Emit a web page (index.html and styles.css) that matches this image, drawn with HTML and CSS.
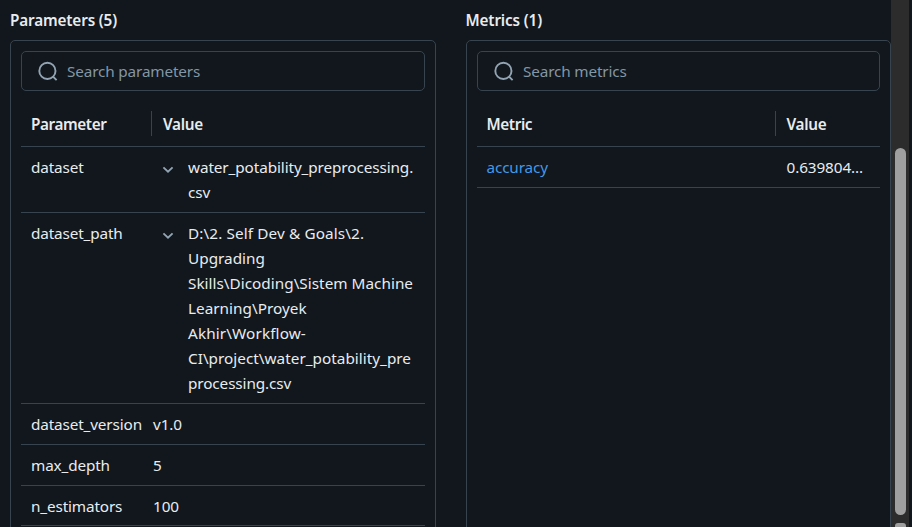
FILE: index.html
```html
<!DOCTYPE html>
<html lang="en">
<head>
<meta charset="utf-8">
<title>Run overview</title>
<link rel="stylesheet" href="styles.css">
</head>
<body>
<div class="app">
  <main class="content">
    <section class="column">
      <h2 class="title">Parameters (5)</h2>
      <div class="panel">
        <div class="search">
          <svg class="search-icon" viewBox="0 0 20 20"><circle cx="9.4" cy="9.9" r="8.1"/><path d="M14.8 15.3 18.6 19.1"/></svg>
          <span>Search parameters</span>
        </div>
        <div class="row head params"><div class="name">Parameter</div><div class="value divided">Value</div></div>
        <div class="row params"><div class="name">dataset</div><div class="value expandable">
          <svg class="chevron" viewBox="0 0 12 8"><path d="M1.4 1.4 6 5.6l4.6-4.2"/></svg>
          <div>water_potability_preprocessing.<br>csv</div></div></div>
        <div class="row params"><div class="name">dataset_path</div><div class="value expandable">
          <svg class="chevron" viewBox="0 0 12 8"><path d="M1.4 1.4 6 5.6l4.6-4.2"/></svg>
          <div><span class="wider">D:\2. Self Dev &amp; Goals\2.</span><br><span class="wide">Upgrading</span><br><span class="wide">Skills\Dicoding\Sistem Machine</span><br><span class="wide">Learning\Proyek</span><br><span class="wider">Akhir\Workflow-</span><br><span class="wide">CI\project\water_potability_pre</span><br>processing.csv</div></div></div>
        <div class="row params"><div class="name">dataset_version</div><div class="value">v1.0</div></div>
        <div class="row params"><div class="name">max_depth</div><div class="value">5</div></div>
        <div class="row params last"><div class="name">n_estimators</div><div class="value">100</div></div>
      </div>
    </section>
    <section class="column metrics-column">
      <h2 class="title">Metrics (1)</h2>
      <div class="panel">
        <div class="search">
          <svg class="search-icon" viewBox="0 0 20 20"><circle cx="9.4" cy="9.9" r="8.1"/><path d="M14.8 15.3 18.6 19.1"/></svg>
          <span>Search metrics</span>
        </div>
        <div class="row head metrics"><div class="name">Metric</div><div class="value divided">Value</div></div>
        <div class="row metrics"><div class="name"><a class="link">accuracy</a></div><div class="value">0.639804...</div></div>
      </div>
    </section>
  </main>
  <div class="scrollbar"><div class="thumb"></div><div class="arrow"></div></div>
  <div class="edge"></div>
</div>
</body>
</html>
```
FILE: styles.css
```css
* { box-sizing: border-box; }
body {
  margin: 0;
  background: #11171c;
  color: #e8ecf0;
  font: 15.3px/25px "Noto Sans", "Open Sans", sans-serif;
  letter-spacing: -0.1px;
  overflow: hidden;
}
.app { display: flex; width: 912px; height: 527px; overflow: hidden; }
.content { display: flex; width: 891px; padding: 8px 0 0 10px; gap: 30px; flex: none; }
.column { width: 426px; flex: none; }
.metrics-column { width: 425px; }
.title { margin: 0 0 7px; font-size: 15.3px; line-height: 25px; font-weight: 600; white-space: nowrap; letter-spacing: -0.16px; }
.metrics-column .title { margin-left: -0.5px; }
.panel { height: 530px; border: 1px solid #37444f; border-radius: 5px; padding: 10px; }
.search {
  display: flex; align-items: center; height: 40px; padding-left: 16px; gap: 9px;
  border: 1px solid #37444f; border-radius: 5px; color: #8396a5; white-space: nowrap;
  letter-spacing: -0.15px;
}
.search-icon { width: 20px; height: 20px; fill: none; stroke: #92a4b3; stroke-width: 1.9; flex: none; }
.row { display: grid; border-bottom: 1px solid #37444f; white-space: nowrap; padding: 8px 0 7px; }
.row.params { grid-template-columns: 122px 1fr; }
.row.metrics { grid-template-columns: 299px 1fr; }
.row.head { height: 56px; padding: 21px 0 9px; font-weight: 600; letter-spacing: -0.3px; }
.row.last { height: 40px; }
.name { padding-left: 10px; letter-spacing: -0.14px; }
.head .name { letter-spacing: -0.4px; }
.metrics .name { padding-left: 9.5px; }
.value { padding-left: 10px; }
.metrics .value { padding-left: 10.5px; }
.divided { position: relative; }
.params .divided { padding-left: 20px; }
.divided::before { content: ""; position: absolute; left: 8px; top: -1px; width: 1px; height: 25px; background: #37444f; }
.metrics .divided::before { left: -1px; }
.expandable { display: flex; padding-left: 19px; gap: 14px; }
.chevron { width: 12px; height: 8px; margin-top: 11px; fill: none; stroke: #92a4b3; stroke-width: 1.9; flex: none; }
.wide { letter-spacing: 0.02px; }
.wider { letter-spacing: 0.12px; }
.link { color: #4299e8; }
.scrollbar { width: 18px; background: #2c2c2c; padding: 148px 3px 0 4px; flex: none; }
.thumb { height: 367px; border-radius: 6px; background: #9f9f9f; }
.arrow { height: 8px; margin-top: 8px; border-radius: 3px 3px 0 0; background: #9f9f9f; }
.edge { width: 3px; background: #11171c; }
```
